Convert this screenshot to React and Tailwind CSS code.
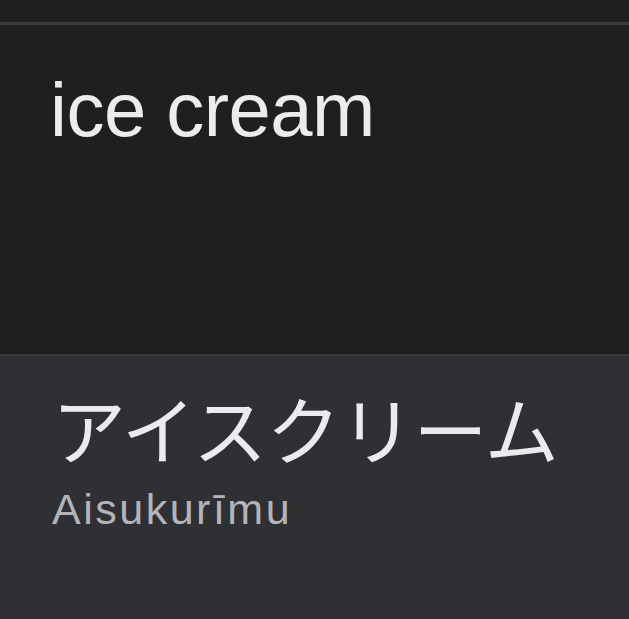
export default function App() {
  return (
    <div className="w-[629px] h-[619px] bg-[#1f1f1f] flex flex-col overflow-hidden" style={{ fontFamily: '"Liberation Sans", Arial, sans-serif' }}>
      <div className="h-[22px] shrink-0" />
      <div className="h-[3px] shrink-0 bg-[#3a3a3a]" />
      <div className="h-[329px] shrink-0 pl-[50px] pt-[40px]">
        <div className="text-[76px] leading-[90px] text-[#ececec] tracking-[-0.5px]">ice cream</div>
      </div>
      <div className="flex-1 bg-[#2f3034] border-t-2 border-[#38383b] pl-[52px] pt-[34px]">
        <div className="text-[74px] leading-[74px] text-[#ebebed] tracking-[-0.5px]" style={{ fontFamily: '"Noto Sans CJK JP", sans-serif' }}>アイスクリーム</div>
        <div className="text-[43px] leading-[50px] text-[#b4b4b8] tracking-[2.5px] mt-[20px]">Aisukurīmu</div>
      </div>
    </div>
  );
}
